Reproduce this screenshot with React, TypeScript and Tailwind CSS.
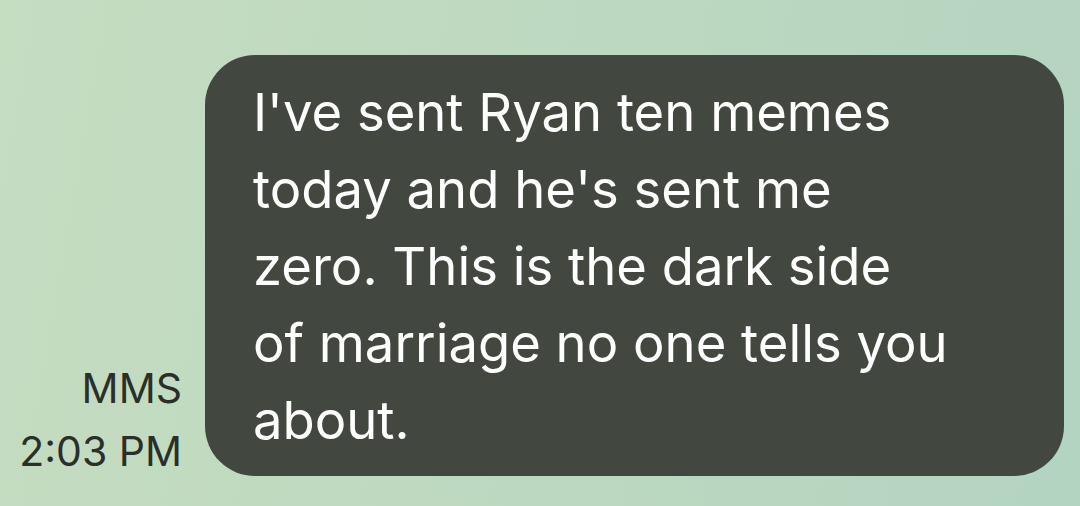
export default function App() {
  const lines = [
    "I've sent Ryan ten memes",
    "today and he's sent me",
    "zero. This is the dark side",
    "of marriage no one tells you",
    "about.",
  ];
  return (
    <div
      className="w-[1080px] h-[506px] overflow-hidden bg-[linear-gradient(100deg,#c5ddc1_0%,#bcd8c0_55%,#b3d4c1_100%)] flex flex-row items-start justify-end pr-[16px] pt-[55px]"
      style={{ fontFamily: "Inter, Roboto, sans-serif" }}
    >
      <div className="flex flex-row items-end gap-[23px]">
        <div className="flex flex-col items-end text-[41px] leading-[63px] text-[#2a2f29] -mb-[7px]">
          <span>MMS</span>
          <span>2:03 PM</span>
        </div>
        <div className="w-[859px] h-[421px] rounded-[50px] bg-[#424840] pl-[48px] pt-[19px] text-white text-[52.6px] leading-[77px]">
          {lines.map((l, i) => (
            <div key={i} className="whitespace-nowrap">
              {l}
            </div>
          ))}
        </div>
      </div>
    </div>
  );
}
